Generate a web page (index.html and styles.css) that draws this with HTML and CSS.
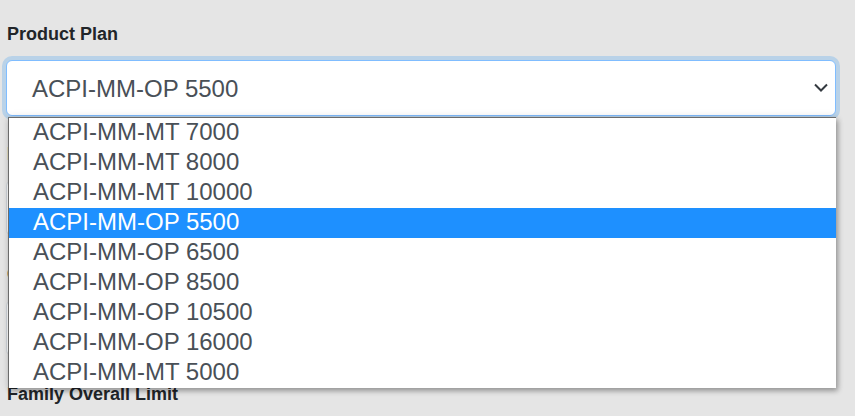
FILE: index.html
```html
<!DOCTYPE html>
<html>
<head>
<meta charset="utf-8">
<link rel="stylesheet" href="styles.css">
</head>
<body>
<form class="form">
  <div class="group">
    <label class="label">Product Plan</label>
    <div class="select-wrap">
      <div class="select">
        <span class="select-value">ACPI-MM-OP 5500</span>
        <svg class="chevron" width="14" height="9" viewBox="0 0 14 9"><path d="M1 1.5 L7 7.5 L13 1.5" fill="none" stroke="#343a40" stroke-width="2"/></svg>
      </div>
      <ul class="listbox">
        <li class="option">ACPI-MM-MT 7000</li>
        <li class="option">ACPI-MM-MT 8000</li>
        <li class="option">ACPI-MM-MT 10000</li>
        <li class="option selected">ACPI-MM-OP 5500</li>
        <li class="option">ACPI-MM-OP 6500</li>
        <li class="option">ACPI-MM-OP 8500</li>
        <li class="option">ACPI-MM-OP 10500</li>
        <li class="option">ACPI-MM-OP 16000</li>
        <li class="option">ACPI-MM-MT 5000</li>
      </ul>
    </div>
  </div>
  <div class="group">
    <label class="label">Benefit Option</label>
    <div class="input"></div>
  </div>
  <div class="group">
    <label class="label">Coverage Type</label>
    <div class="input"></div>
  </div>
  <div class="group">
    <label class="label">Family Overall Limit</label>
    <div class="input"></div>
  </div>
</form>
</body>
</html>
```
FILE: styles.css
```css
html, body {
  margin: 0;
  padding: 0;
  background: #e5e5e5;
  font-family: "Liberation Sans", Arial, sans-serif;
  overflow: hidden;
}
.form {
  padding: 24px 19px 0 6px;
}
.group {
  height: 120px;
}
.label {
  display: block;
  padding-left: 1px;
  margin-bottom: 15px;
  font-size: 18px;
  line-height: 21px;
  font-weight: bold;
  color: #212529;
}
.select-wrap {
  position: relative;
}
.select {
  box-sizing: border-box;
  height: 56px;
  display: flex;
  align-items: center;
  justify-content: space-between;
  padding: 2px 7px 0 25px;
  background: #fff;
  border: 1px solid #80bdff;
  border-radius: 6px;
  box-shadow: 0 0 0 4px #b9d2e8;
}
.select-value {
  font-size: 24px;
  line-height: 52px;
  color: #495057;
}
.chevron {
  display: block;
  margin-top: -4px;
}
.input {
  box-sizing: border-box;
  height: 56px;
  background: #fff;
  border: 1px solid #ced4da;
  border-radius: 6px;
}
.listbox {
  position: absolute;
  top: 57px;
  left: 2px;
  width: 828px;
  box-sizing: border-box;
  margin: 0;
  padding: 0;
  list-style: none;
  background: #fff;
  border-top: 1px solid #6b6b6b;
  border-left: 1px solid #6b6b6b;
  box-shadow: 2px 3px 5px rgba(0, 0, 0, 0.3), 0 0 8px rgba(0, 0, 0, 0.12);
  z-index: 10;
}
.option {
  height: 30px;
  box-sizing: border-box;
  padding: 0 0 3px 24px;
  font-size: 24px;
  line-height: 27px;
  color: #495057;
  white-space: nowrap;
}
.option.selected {
  background: #1e90ff;
  color: #fff;
}
```
